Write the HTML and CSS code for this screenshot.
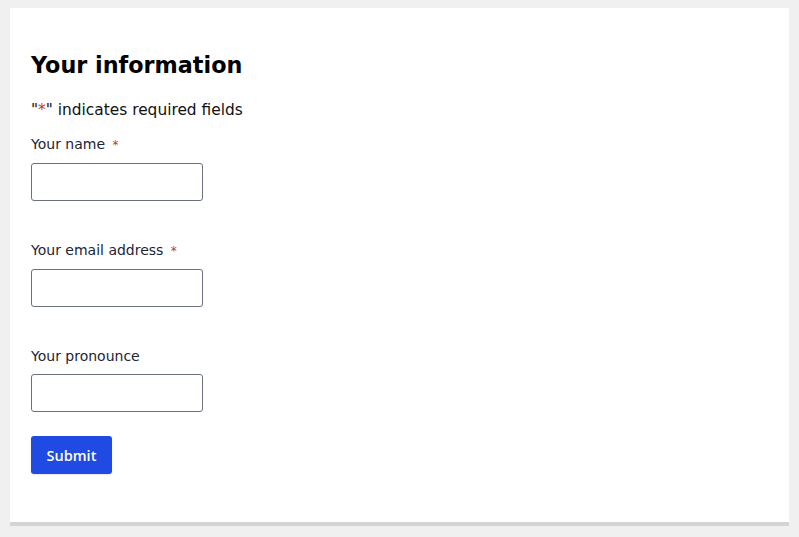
FILE: index.html
```html
<!DOCTYPE html>
<html>
<head>
<meta charset="utf-8">
<link rel="stylesheet" href="styles.css">
</head>
<body>
<div class="card">
  <h2 class="title">Your information</h2>
  <p class="req-note">"<span class="star">*</span>" indicates required fields</p>
  <form class="form">
    <div class="field">
      <label class="label">Your name <span class="star">*</span></label>
      <input class="input" type="text">
    </div>
    <div class="field">
      <label class="label">Your email address <span class="star">*</span></label>
      <input class="input" type="text">
    </div>
    <div class="field last">
      <label class="label">Your pronounce</label>
      <input class="input" type="text">
    </div>
    <button class="submit" type="button">Submit</button>
  </form>
</div>
</body>
</html>
```
FILE: styles.css
```css
html, body { margin: 0; padding: 0; }
body {
  background: #f0f0f0;
  font-family: "DejaVu Sans", "Open Sans", sans-serif;
  padding: 8px 10px 0 10px;
}
.card {
  background: #fff;
  height: 518px;
  box-sizing: border-box;
  border-bottom: 4px solid #d4d4d4;
  padding: 39px 21px 0 21px;
}
.title {
  margin: 0;
  font-size: 22.3px;
  line-height: 36px;
  font-weight: bold;
  color: #000;
}
.req-note {
  margin: 15px 0 0 0;
  font-size: 15.4px;
  line-height: 24px;
  color: #111;
}
.star { color: #c0392b; }
.form { margin-top: 12px; display: flex; flex-direction: column; align-items: flex-start; }
.field { display: flex; flex-direction: column; align-items: flex-start; margin-bottom: 39px; }
.field.last { margin-bottom: 24px; }
.label {
  font-size: 14px;
  line-height: 20px;
  color: #1c2536;
  margin-bottom: 8px;
}
.label .star { margin-left: 3px; font-size: 12px; }
.input {
  width: 172px;
  height: 38px;
  box-sizing: border-box;
  border: 1px solid #6b7080;
  border-radius: 3px;
  margin: 0;
  padding: 0 8px;
  background: #fff;
}
.submit {
  width: 81px;
  height: 38px;
  background: #204ae4;
  color: #fff;
  border: none;
  border-radius: 3px;
  font-family: "Open Sans", "DejaVu Sans", sans-serif;
  font-size: 14.5px;
  font-weight: 600;
  padding: 0;
  box-shadow: 0 1px 2px rgba(0,0,0,0.1);
}
```
